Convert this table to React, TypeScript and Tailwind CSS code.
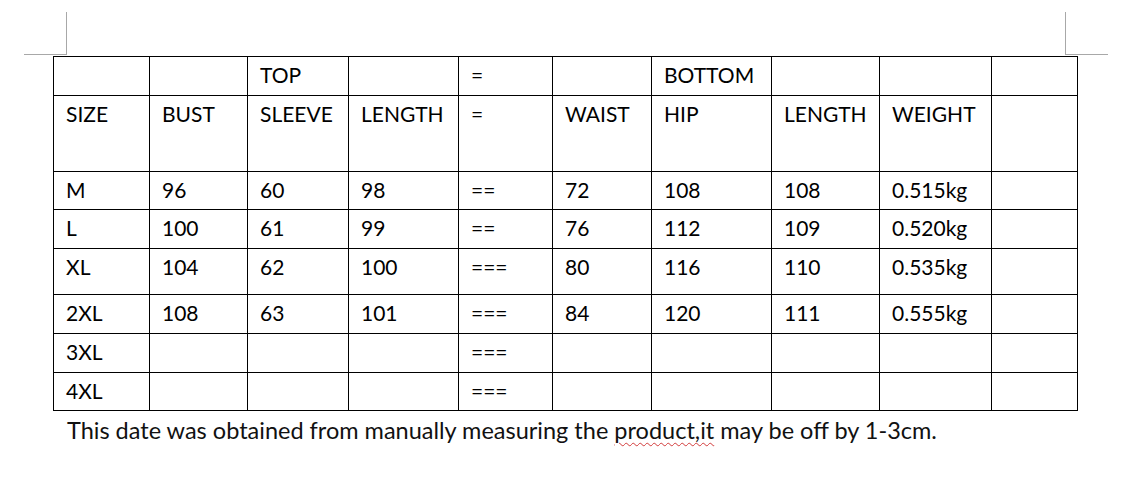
import React from "react"

const widths = [95, 97, 100, 109, 93, 98, 119, 107, 111, 85]
const heights = [38, 75, 37, 38, 45, 38, 38, 37]

const rows: string[][] = [
    ["", "", "TOP", "", "=", "", "BOTTOM", "", "", ""],
    ["SIZE", "BUST", "SLEEVE", "LENGTH", "=", "WAIST", "HIP", "LENGTH", "WEIGHT", ""],
    ["M", "96", "60", "98", "==", "72", "108", "108", "0.515kg", ""],
    ["L", "100", "61", "99", "==", "76", "112", "109", "0.520kg", ""],
    ["XL", "104", "62", "100", "===", "80", "116", "110", "0.535kg", ""],
    ["2XL", "108", "63", "101", "===", "84", "120", "111", "0.555kg", ""],
    ["3XL", "", "", "", "===", "", "", "", "", ""],
    ["4XL", "", "", "", "===", "", "", "", "", ""],
]

export default function App() {
    return (
        <div
            className="w-[1143px] h-[481px] bg-white text-black overflow-hidden"
            style={{ fontFamily: "Lato, 'Open Sans', sans-serif" }}
        >
            {/* page margin marks */}
            <div className="flex justify-between pt-[12px] pl-[24px] pr-[35px]">
                <div className="w-[43px] h-[43px] border-r border-b border-[#a8a8a8]" />
                <div className="w-[43px] h-[43px] border-l border-b border-[#a8a8a8]" />
            </div>

            <div className="ml-[53px] mt-[1px] w-fit border border-black bg-black">
                <div
                    className="grid gap-px"
                    style={{
                        gridTemplateColumns: widths.map((w) => `${w}px`).join(" "),
                        gridTemplateRows: heights.map((h) => `${h}px`).join(" "),
                    }}
                >
                    {rows.map((row, r) =>
                        row.map((cell, c) => (
                            <div
                                key={`${r}-${c}`}
                                className="bg-white pl-3 pt-[6px] text-[21px] leading-[24px] whitespace-nowrap"
                            >
                                {cell}
                            </div>
                        ))
                    )}
                </div>
            </div>

            <p className="ml-[67px] mt-[5px] text-[23.5px] leading-[28px] text-[#111]">
                This date was obtained from manually measuring the{" "}
                <span className="underline decoration-wavy decoration-[#d23b3b] decoration-1 underline-offset-[3px]">
                    product,it
                </span>{" "}
                may be off by 1-3cm.
            </p>
        </div>
    )
}
